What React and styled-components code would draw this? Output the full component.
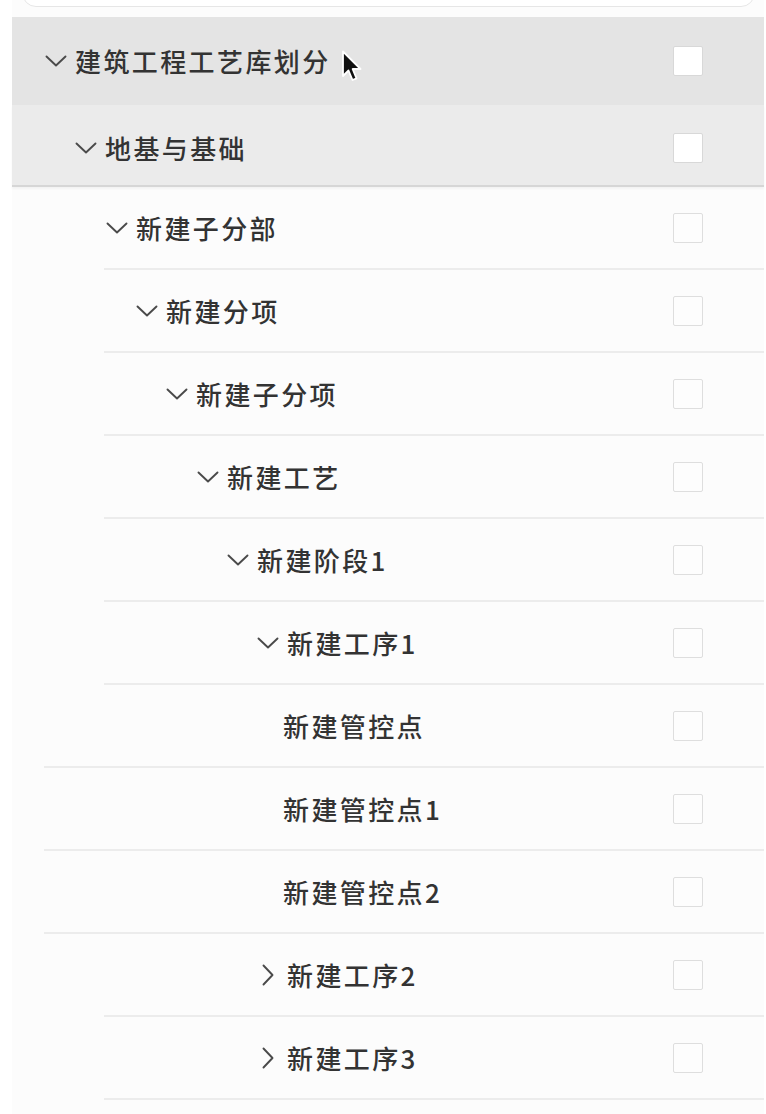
import React from 'react';
import styled, { createGlobalStyle } from 'styled-components';

const GlobalStyle = createGlobalStyle`
  html, body {
    margin: 0;
    padding: 0;
    background: #ffffff;
  }
  body {
    font-family: 'Noto Sans CJK SC', 'Noto Sans', sans-serif;
    color: #2e2e2e;
  }
`;

const Panel = styled.div`
  margin: 0 2px 0 12px;
  min-height: 100vh;
  background: #fcfcfc;
  display: flex;
  flex-direction: column;
`;

const SearchClip = styled.div`
  height: 7px;
  overflow: hidden;
  display: flex;
  align-items: flex-end;
  padding: 0 9px 0 10px;
  margin-bottom: 10px;
`;

const SearchBox = styled.div`
  flex: 1;
  height: 40px;
  border: 1.5px solid #e6e6e6;
  border-radius: 14px;
  background: #ffffff;
  box-sizing: border-box;
`;

const Row = styled.div`
  position: relative;
  display: flex;
  background: ${p => p.bg || 'transparent'};
  box-shadow: ${p => (p.shade ? '0 2px 2px rgba(0, 0, 0, 0.04)' : 'none')};
`;

const RowInner = styled.div`
  flex: 1;
  display: flex;
  align-items: center;
  box-sizing: border-box;
  height: ${p => p.h}px;
  margin-left: ${p => p.lineFrom}px;
  padding-left: ${p => p.indent - p.lineFrom}px;
  padding-top: ${p => p.padTop || 0}px;
  padding-right: 61px;
  border-bottom: ${p => (p.line ? `2px solid ${p.line}` : 'none')};
`;

const Toggle = styled.span`
  width: 22px;
  height: 22px;
  flex: none;
  display: flex;
  align-items: center;
  justify-content: center;
  margin-right: 8px;
`;

const Label = styled.span`
  flex: 1;
  font-size: 26px;
  font-weight: 500;
  letter-spacing: 2.4px;
  line-height: 1;
  color: #333333;
  white-space: nowrap;
`;

const Check = styled.span`
  width: 30px;
  height: 30px;
  flex: none;
  box-sizing: border-box;
  border: 1.5px solid ${p => (p.strong ? '#d8d8d8' : '#dedede')};
  border-radius: 2px;
  background: ${p => (p.strong ? '#ffffff' : '#fdfdfd')};
`;

const Cursor = styled.svg`
  position: absolute;
  left: ${p => p.x}px;
  top: ${p => p.y}px;
  pointer-events: none;
`;

const ChevronDown = () => (
  <svg width="22" height="12" viewBox="0 0 22 12">
    <polyline points="1.5,1.5 11,10.5 20.5,1.5" fill="none" stroke="#4a4a4a" strokeWidth="1.9" strokeLinecap="round" strokeLinejoin="round" />
  </svg>
);

const ChevronRight = () => (
  <svg width="12" height="22" viewBox="0 0 12 22">
    <polyline points="1.5,1.5 10.5,11 1.5,20.5" fill="none" stroke="#4a4a4a" strokeWidth="1.9" strokeLinecap="round" strokeLinejoin="round" />
  </svg>
);

const rows = [
  { label: '建筑工程工艺库划分', level: 0, open: true, bg: '#e4e4e4', h: 88, lineFrom: 0, strong: true, cursor: true },
  { label: '地基与基础', level: 1, open: true, bg: '#ebebeb', h: 82, lineFrom: 0, line: '#d6d6d6', padTop: 6, strong: true, shade: true },
  { label: '新建子分部', level: 2, open: true, lineFrom: 92 },
  { label: '新建分项', level: 3, open: true, lineFrom: 92 },
  { label: '新建子分项', level: 4, open: true, lineFrom: 92 },
  { label: '新建工艺', level: 5, open: true, lineFrom: 92 },
  { label: '新建阶段1', level: 6, open: true, lineFrom: 92 },
  { label: '新建工序1', level: 7, open: true, lineFrom: 92 },
  { label: '新建管控点', leaf: true, lineFrom: 32 },
  { label: '新建管控点1', leaf: true, lineFrom: 32 },
  { label: '新建管控点2', leaf: true, lineFrom: 32 },
  { label: '新建工序2', level: 7, open: false, lineFrom: 92 },
  { label: '新建工序3', level: 7, open: false, lineFrom: 92 },
];

const TreeRow = ({ item }) => {
  const indent = item.leaf ? 271 : Math.round(33 + item.level * 30.3);
  return (
    <Row bg={item.bg} shade={item.shade}>
      <RowInner
        h={item.h || 83}
        indent={indent}
        lineFrom={item.lineFrom}
        padTop={item.padTop}
        line={item.line || (item.bg ? null : '#ececec')}
      >
        {!item.leaf && (
          <Toggle>{item.open ? <ChevronDown /> : <ChevronRight />}</Toggle>
        )}
        <Label>{item.label}</Label>
        <Check strong={item.strong} />
      </RowInner>
      {item.cursor && (
        <Cursor x={329} y={33} width="22" height="34" viewBox="0 0 22 34">
          <path
            d="M2 1.5 L2 26 L7.5 20.5 L11.5 30 L15.5 28.3 L11.6 19 L19.5 19 Z"
            fill="#111111"
            stroke="#ffffff"
            strokeWidth="1.8"
            strokeLinejoin="round"
          />
        </Cursor>
      )}
    </Row>
  );
};

const App = () => (
  <>
    <GlobalStyle />
    <Panel>
      <SearchClip>
        <SearchBox />
      </SearchClip>
      {rows.map(item => (
        <TreeRow key={item.label} item={item} />
      ))}
    </Panel>
  </>
);

export default App;
